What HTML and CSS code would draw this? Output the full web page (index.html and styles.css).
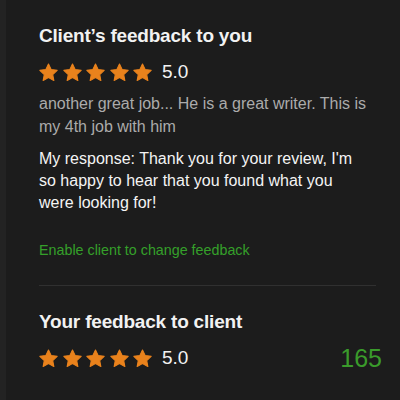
FILE: index.html
```html
<!DOCTYPE html>
<html lang="en">
<head>
  <meta charset="UTF-8">
  <title>Feedback</title>
  <link rel="stylesheet" href="styles.css">
</head>
<body>
  <div class="panel">

    <section class="feedback">
      <h2>Client’s feedback to you</h2>
      <div class="rating">
        <span class="stars">
          <svg viewBox="0 0 24 24"><path d="M12 1.3L15.29 8.27 22.94 9.25 17.33 14.53 18.76 22.1 12 18.4 5.24 22.1 6.67 14.53 1.06 9.25 8.71 8.27Z"/></svg>
          <svg viewBox="0 0 24 24"><path d="M12 1.3L15.29 8.27 22.94 9.25 17.33 14.53 18.76 22.1 12 18.4 5.24 22.1 6.67 14.53 1.06 9.25 8.71 8.27Z"/></svg>
          <svg viewBox="0 0 24 24"><path d="M12 1.3L15.29 8.27 22.94 9.25 17.33 14.53 18.76 22.1 12 18.4 5.24 22.1 6.67 14.53 1.06 9.25 8.71 8.27Z"/></svg>
          <svg viewBox="0 0 24 24"><path d="M12 1.3L15.29 8.27 22.94 9.25 17.33 14.53 18.76 22.1 12 18.4 5.24 22.1 6.67 14.53 1.06 9.25 8.71 8.27Z"/></svg>
          <svg viewBox="0 0 24 24"><path d="M12 1.3L15.29 8.27 22.94 9.25 17.33 14.53 18.76 22.1 12 18.4 5.24 22.1 6.67 14.53 1.06 9.25 8.71 8.27Z"/></svg>
        </span>
        <span class="score">5.0</span>
      </div>
      <p class="comment">another great job... He is a great writer. This is my 4th job with him</p>
      <p class="response">My response: Thank you for your review, I'm so happy to hear that you found what you were looking for!</p>
      <a class="enable" href="#">Enable client to change feedback</a>
    </section>

    <section class="feedback last">
      <h2>Your feedback to client</h2>
      <div class="rating">
        <span class="stars">
          <svg viewBox="0 0 24 24"><path d="M12 1.3L15.29 8.27 22.94 9.25 17.33 14.53 18.76 22.1 12 18.4 5.24 22.1 6.67 14.53 1.06 9.25 8.71 8.27Z"/></svg>
          <svg viewBox="0 0 24 24"><path d="M12 1.3L15.29 8.27 22.94 9.25 17.33 14.53 18.76 22.1 12 18.4 5.24 22.1 6.67 14.53 1.06 9.25 8.71 8.27Z"/></svg>
          <svg viewBox="0 0 24 24"><path d="M12 1.3L15.29 8.27 22.94 9.25 17.33 14.53 18.76 22.1 12 18.4 5.24 22.1 6.67 14.53 1.06 9.25 8.71 8.27Z"/></svg>
          <svg viewBox="0 0 24 24"><path d="M12 1.3L15.29 8.27 22.94 9.25 17.33 14.53 18.76 22.1 12 18.4 5.24 22.1 6.67 14.53 1.06 9.25 8.71 8.27Z"/></svg>
          <svg viewBox="0 0 24 24"><path d="M12 1.3L15.29 8.27 22.94 9.25 17.33 14.53 18.76 22.1 12 18.4 5.24 22.1 6.67 14.53 1.06 9.25 8.71 8.27Z"/></svg>
        </span>
        <span class="score">5.0</span>
        <span class="count">165</span>
      </div>
    </section>

  </div>
</body>
</html>
```

FILE: styles.css
```css
html, body {
  margin: 0;
  height: 100%;
}

body {
  font-family: "Liberation Sans", Arial, sans-serif;
  background-color: #232323;
  color: #f2f2f2;
}

.panel {
  margin-left: 6px;
  min-height: 100%;
  background-color: #1c1c1c;
  padding: 22px 24px 0 33px;
  box-sizing: border-box;
}

.feedback {
  padding-bottom: 25px;
  border-bottom: 1px solid #303030;
}

.feedback.last {
  border-bottom: none;
  padding-top: 22px;
}

h2 {
  margin: 0;
  font-size: 19px;
  font-weight: bold;
  line-height: 28px;
  letter-spacing: -0.2px;
}

.rating {
  display: flex;
  align-items: center;
  margin-top: 10px;
  height: 24px;
}

.stars {
  display: flex;
  gap: 4.5px;
}

/* filled star, rounded joins */
.stars svg {
  width: 19px;
  height: 19px;
  fill: #e9821c;
  stroke: #e9821c;
  stroke-width: 1.4;
  stroke-linejoin: round;
}

.score {
  margin-left: 10px;
  font-size: 19px;
  line-height: 24px;
}

.count {
  margin-left: auto;
  font-size: 25px;
  color: #3a9b2b;
  margin-right: -6px;
}

.comment,
.response {
  margin: 8px 6px 0 0;
  font-size: 16px;
  line-height: 23px;
  color: #ababab;
}

.response {
  margin-top: 10px;
  line-height: 22px;
  color: #f4f4f4;
}

.enable {
  display: block;
  margin-top: 26px;
  font-size: 14.3px;
  line-height: 20px;
  color: #35a02a;
  text-decoration: none;
}
```
